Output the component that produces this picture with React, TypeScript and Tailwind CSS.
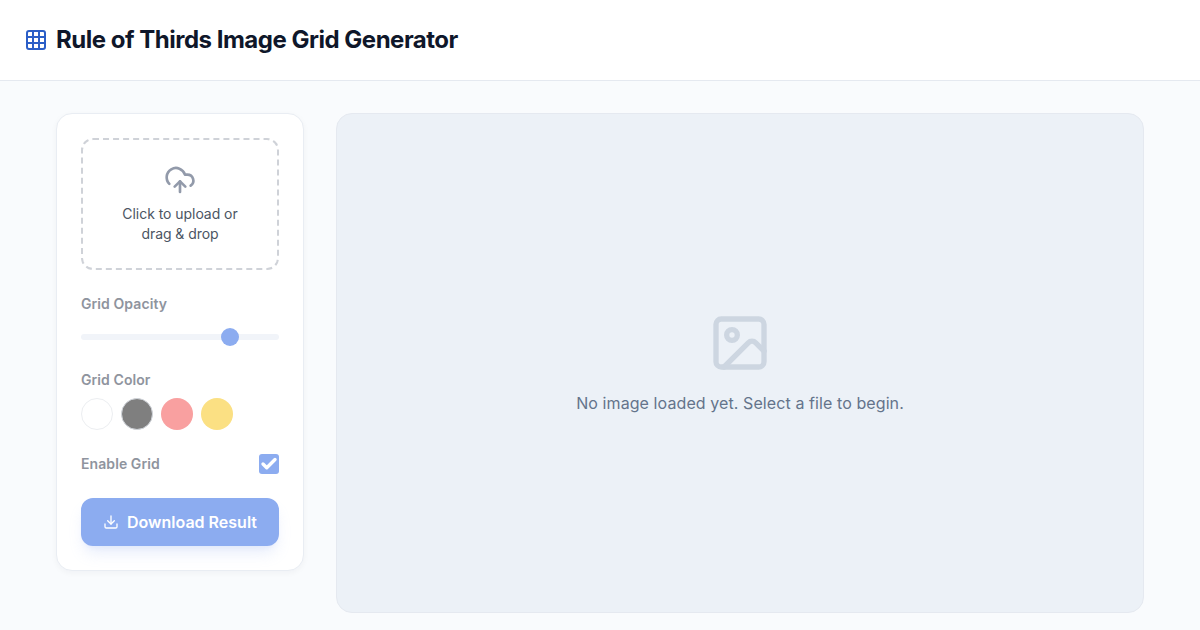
import { Check, CloudUpload, Download, Grid3x3, Image } from 'lucide-react';

const swatches = [
  'bg-white border border-[#eceef1]',
  'bg-[#7f7f7f] border border-[#d1d5db]',
  'bg-[#f9a0a0]',
  'bg-[#fbe083]',
];

export default function App() {
  return (
    <div className="flex h-[630px] flex-col overflow-hidden bg-[#f9fbfd] font-['Inter',sans-serif]">
      <header className="flex h-[81px] items-center gap-2 border-b border-[#e5e9f0] bg-white px-6">
        <Grid3x3 className="h-6 w-6 text-[#2b5ec7]" />
        <h1 className="text-2xl font-bold tracking-[-0.49px] text-[#0f172a]">Rule of Thirds Image Grid Generator</h1>
      </header>
      <main className="flex items-start gap-8 px-14 pt-8">
        <aside className="flex w-[248px] flex-col rounded-2xl border border-[#e9edf3] bg-white p-6 shadow-[0_2px_6px_rgba(15,23,42,0.04)]">
          <div className="flex h-[132px] flex-col items-center justify-center rounded-xl border-2 border-dashed border-[#cfd2d8] px-4 text-center">
            <CloudUpload className="mb-2 h-8 w-8 text-[#929aaa]" />
            <p className="text-sm leading-5 tracking-[-0.05px] text-[#4b5563]">
              Click to upload or
              <br />
              drag &amp; drop
            </p>
          </div>
          <label className="mt-6 text-sm leading-5 font-semibold tracking-[0.08px] text-[#8f949e]">Grid Opacity</label>
          <div className="relative mt-5 h-[6px] rounded-full bg-[#f1f4f9]">
            <div className="absolute top-[-6px] left-[140px] h-[18px] w-[18px] rounded-full bg-[#8cacf0]" />
          </div>
          <label className="mt-[30px] text-sm leading-5 font-semibold tracking-[0.08px] text-[#8f949e]">Grid Color</label>
          <div className="mt-2 flex gap-2">
            {swatches.map((swatch) => (
              <div key={swatch} className={`h-8 w-8 rounded-full ${swatch}`} />
            ))}
          </div>
          <div className="mt-6 flex items-center justify-between">
            <span className="text-sm leading-5 font-semibold tracking-[0.08px] text-[#8f949e]">Enable Grid</span>
            <span className="flex h-5 w-5 items-center justify-center rounded-[3px] bg-[#8cacf0]">
              <Check className="h-[18px] w-[18px] text-white" strokeWidth={4.5} />
            </span>
          </div>
          <button className="mt-6 flex h-12 items-center justify-center gap-2 rounded-xl bg-[#8cacf0] font-semibold text-white shadow-lg shadow-[#8cacf0]/20">
            <Download className="h-4 w-4" />
            Download Result
          </button>
        </aside>
        <section className="flex h-[500px] flex-1 flex-col items-center justify-center rounded-2xl border border-[#e5e9f0] bg-[#ecf1f7]">
          <Image className="mb-4 h-16 w-16 text-[#cdd6e1]" />
          <p className="text-base tracking-[0.09px] text-[#64748b]">No image loaded yet. Select a file to begin.</p>
        </section>
      </main>
    </div>
  );
}
